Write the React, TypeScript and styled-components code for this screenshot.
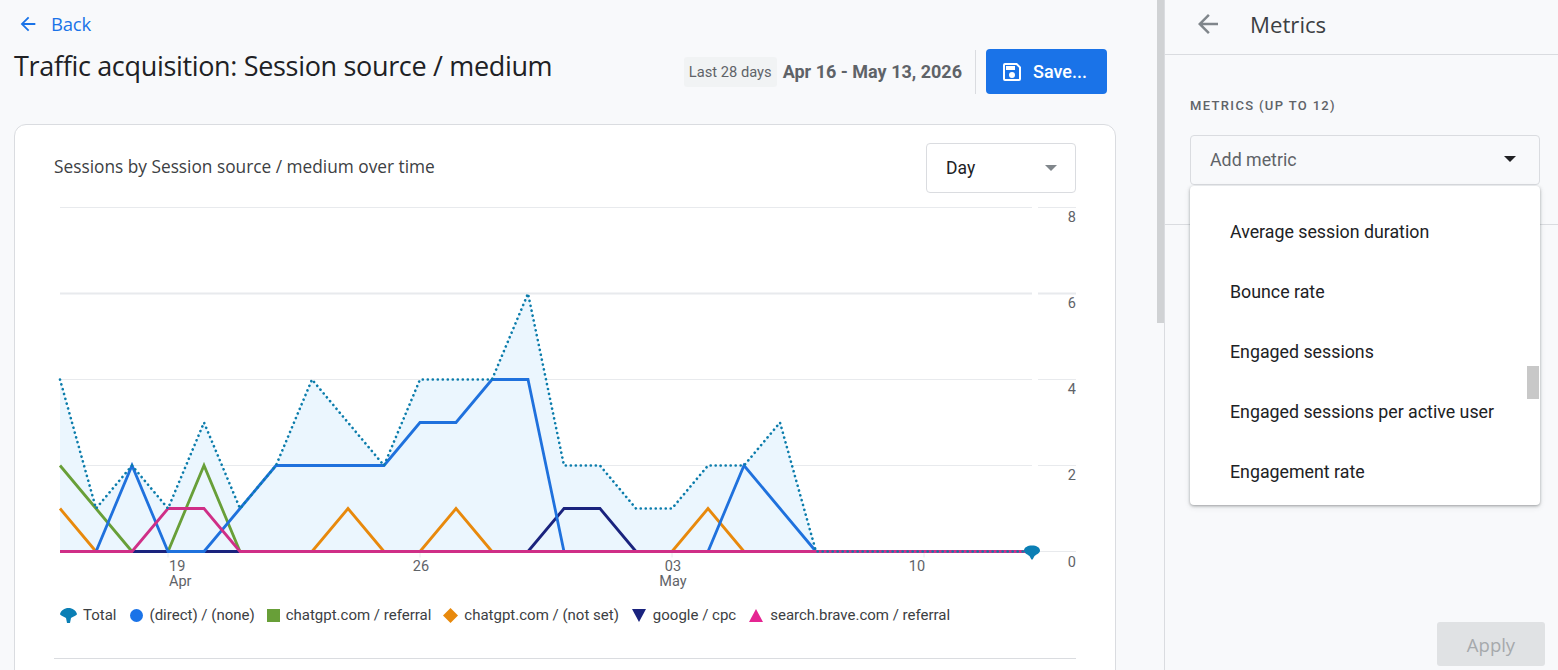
import styled, { createGlobalStyle } from "styled-components";

const GlobalStyle = createGlobalStyle`
  html, body { margin: 0; padding: 0; background: #f8f9fb; }
  body { font-family: Roboto, "Liberation Sans", sans-serif; color: #202124; }
`;

// chart scale: 36px per day, 43px per session, in page pixels minus the svg origin
const ORIGIN_X = 54;
const ORIGIN_Y = 200;
const px = (i: number) => 60 + i * 36 - ORIGIN_X;
const py = (v: number) => 551.5 - v * 43 - ORIGIN_Y;

const pad = (values: number[]) => [...values, ...Array(28 - values.length).fill(0)];

const TOTAL = pad([4, 1, 2, 1, 3, 1, 2, 4, 3, 2, 4, 4, 4, 6, 2, 2, 1, 1, 2, 2, 3]);
const DIRECT = pad([0, 0, 2, 0, 0, 1, 2, 2, 2, 2, 3, 3, 4, 4, 0, 0, 0, 0, 0, 2, 1]);
const GREEN = pad([2, 1, 0, 0, 2]);
const ORANGE = pad([1, 0, 0, 0, 0, 0, 0, 0, 1, 0, 0, 1, 0, 0, 0, 0, 0, 0, 1]);
const NAVY = pad([0, 0, 0, 0, 0, 0, 0, 0, 0, 0, 0, 0, 0, 0, 1, 1]);
const PINK = pad([0, 0, 0, 1, 1]);

const toPoints = (values: number[]) => values.map((v, i) => `${px(i)},${py(v)}`).join(" ");

const GRID = [
  { value: 8, label: "8", weight: 1 },
  { value: 6, label: "6", weight: 2 },
  { value: 4, label: "4", weight: 1 },
  { value: 2, label: "2", weight: 1 },
  { value: 0, label: "0", weight: 1 },
];

const METRICS = [
  "Average session duration",
  "Bounce rate",
  "Engaged sessions",
  "Engaged sessions per active user",
  "Engagement rate",
];

const ArrowBack = ({ size, color }: { size: number; color: string }) => (
  <svg width={size} height={size} viewBox="0 0 24 24" fill={color}>
    <path d="M20 11H7.83l5.59-5.59L12 4l-8 8 8 8 1.41-1.41L7.83 13H20v-2z" />
  </svg>
);

const SaveIcon = () => (
  <svg width="24" height="24" viewBox="0 0 24 24" fill="#fff">
    <path d="M17 3H5a2 2 0 0 0-2 2v14a2 2 0 0 0 2 2h14a2 2 0 0 0 2-2V7l-4-4zm2 16H5V5h11.17L19 7.83V19zm-7-7a3 3 0 1 0 0 6 3 3 0 0 0 0-6zM6 6h9v4H6z" />
  </svg>
);

const LegendMark = ({ kind }: { kind: string }) => {
  if (kind === "total") {
    return (
      <svg width="17" height="15" viewBox="0 0 17 15" fill="#0b7fb5">
        <path d="M0 6C1 2.5 4.5 0 8.5 0S16 2.5 17 6c0 1.5-4 2.5-6 4l-1 5H7L6 10C4 8.5 0 7.5 0 6z" />
      </svg>
    );
  }
  if (kind === "circle") {
    return (
      <svg width="15" height="13" viewBox="-1 0 15 13" fill="#1a73e8">
        <circle cx="6.5" cy="6.5" r="6.5" />
      </svg>
    );
  }
  if (kind === "square") {
    return (
      <svg width="13" height="13" viewBox="0 0 13 13" fill="#689f38">
        <rect width="13" height="13" />
      </svg>
    );
  }
  if (kind === "diamond") {
    return (
      <svg width="15" height="15" viewBox="0 0 16 16" fill="#e8890c">
        <path d="M8 0l8 8-8 8-8-8z" />
      </svg>
    );
  }
  if (kind === "down") {
    return (
      <svg width="16" height="13" viewBox="-1 0 16 13" fill="#1a237e">
        <path d="M0 0h14L7 13z" />
      </svg>
    );
  }
  return (
    <svg width="16" height="13" viewBox="-1 0 16 13" fill="#e52592">
      <path d="M7 0l7 13H0z" />
    </svg>
  );
};

const LEGEND = [
  { kind: "total", label: "Total" },
  { kind: "circle", label: "(direct) / (none)" },
  { kind: "square", label: "chatgpt.com / referral" },
  { kind: "diamond", label: "chatgpt.com / (not set)" },
  { kind: "down", label: "google / cpc" },
  { kind: "up", label: "search.brave.com / referral" },
];

const Chart = () => (
  <ChartSvg width="1022" height="396" viewBox="0 0 1022 396">
    {GRID.map((g) => (
      <g key={g.value}>
        <GridLine x1={px(0)} x2={978} y1={py(g.value)} y2={py(g.value)} strokeWidth={g.weight} />
        <GridLine x1={984} x2={1022} y1={py(g.value)} y2={py(g.value)} strokeWidth={g.weight} />
        <AxisText x={1022} y={py(g.value) + (g.value === 0 ? 15.5 : 14.5)} textAnchor="end">
          {g.label}
        </AxisText>
      </g>
    ))}

    <polygon points={`${px(0)},${py(0)} ${toPoints(TOTAL)} ${px(27)},${py(0)}`} fill="#ebf6fe" />

    {[3, 10, 17, 24].map((i) => (
      <GridLine key={i} x1={px(i)} x2={px(i)} y1={py(0)} y2={py(0) + 6} strokeWidth={1} />
    ))}

    <SeriesLine points={toPoints(ORANGE)} stroke="#e8890c" />
    <SeriesLine points={toPoints(GREEN)} stroke="#689f38" />
    <SeriesLine points={toPoints(NAVY)} stroke="#1a237e" />
    <SeriesLine points={toPoints(DIRECT)} stroke="#1f71dd" />
    <SeriesLine points={toPoints(PINK)} stroke="#cf2f87" />
    <DottedLine points={toPoints(TOTAL)} />

    <path
      transform={`translate(${px(27) - 8} ${py(0) - 6})`}
      fill="#0b7fb5"
      d="M0 5C0 2 3.5 0 8 0s8 2 8 5c0 2.5-3.5 4-5.5 5.5L8.6 14H7.4L5.5 10.5C3.5 9 0 7.5 0 5z"
    />

    <AxisText x={px(3) + 1} y={371}>19</AxisText>
    <AxisText x={px(3) + 1} y={386}>Apr</AxisText>
    <AxisText x={px(10) + 1} y={371} textAnchor="middle">26</AxisText>
    <AxisText x={px(17) + 1} y={371} textAnchor="middle">03</AxisText>
    <AxisText x={px(17) + 1} y={386} textAnchor="middle">May</AxisText>
    <AxisText x={px(24) - 7} y={371} textAnchor="middle">10</AxisText>
  </ChartSvg>
);

const App = () => (
  <Page>
    <GlobalStyle />
    <Main>
      <BackRow>
        <ArrowBack size={22} color="#1a73e8" />
        <BackLabel>Back</BackLabel>
      </BackRow>

      <HeadRow>
        <Title>Traffic acquisition: Session source / medium</Title>
        <Toolbar>
          <RangeChip>Last 28 days</RangeChip>
          <DateRange>Apr 16 - May 13, 2026</DateRange>
          <Divider />
          <SaveButton>
            <SaveIcon />
            Save...
          </SaveButton>
        </Toolbar>
      </HeadRow>

      <Card>
        <CardHead>
          <CardTitle>Sessions by Session source / medium over time</CardTitle>
          <GrainSelect>
            Day
            <Caret $color="#80868b" />
          </GrainSelect>
        </CardHead>
        <Chart />
        <Legend>
          {LEGEND.map((item) => (
            <LegendItem key={item.label}>
              <LegendMark kind={item.kind} />
              {item.label}
            </LegendItem>
          ))}
        </Legend>
        <CardRule />
      </Card>
    </Main>

    <ScrollTrack>
      <ScrollThumb />
    </ScrollTrack>

    <Panel>
      <PanelHead>
        <ArrowBack size={30} color="#80868b" />
        <PanelTitle>Metrics</PanelTitle>
      </PanelHead>
      <PanelSection>
        <FieldLabel>METRICS (UP TO 12)</FieldLabel>
        <MetricField>
          Add metric
          <Caret $color="#202124" />
        </MetricField>
        <Menu>
          {METRICS.map((m) => (
            <MenuItem key={m}>{m}</MenuItem>
          ))}
          <MenuThumb />
        </Menu>
      </PanelSection>
      <PanelFoot>
        <ApplyButton>Apply</ApplyButton>
      </PanelFoot>
    </Panel>
  </Page>
);

const Page = styled.div`
  display: flex;
  width: 1558px;
  height: 670px;
  overflow: hidden;
  background: #f8f9fb;
`;
const Main = styled.main`
  width: 1157px;
  flex: none;
  padding: 0 41px 0 14px;
  box-sizing: border-box;
`;
const BackRow = styled.div`
  display: flex;
  align-items: center;
  gap: 12px;
  height: 47px;
  margin-bottom: 2px;
  padding-left: 3px;
`;
const BackLabel = styled.span`
  font-family: "Open Sans", sans-serif;
  font-size: 18.5px;
  font-weight: 500;
  letter-spacing: -0.2px;
  color: #1a73e8;
`;
const HeadRow = styled.div`
  display: flex;
  justify-content: space-between;
  height: 45px;
  padding-right: 9px;
`;
const Title = styled.h1`
  margin: 0;
  font-family: "Open Sans", sans-serif;
  font-size: 27px;
  line-height: 34px;
  font-weight: 400;
  letter-spacing: -0.33px;
  color: #202124;
`;
const Toolbar = styled.div`
  display: flex;
  align-items: center;
`;
const RangeChip = styled.span`
  display: flex;
  align-items: center;
  height: 30px;
  padding: 0 5px;
  margin-top: 1px;
  border-radius: 3px;
  background: #f1f3f4;
  font-size: 14.7px;
  color: #5f6368;
`;
const DateRange = styled.span`
  margin-left: 6px;
  font-size: 18px;
  font-weight: 700;
  color: #5f6368;
`;
const Divider = styled.span`
  width: 1px;
  height: 44px;
  margin: 0 10px 0 13px;
  background: #dadce0;
`;
const SaveButton = styled.button`
  display: flex;
  align-items: center;
  gap: 9px;
  width: 121px;
  height: 45px;
  padding: 0 0 0 14px;
  border: 0;
  border-radius: 4px;
  background: #1a73e8;
  font-family: Roboto, sans-serif;
  font-size: 18px;
  font-weight: 500;
  color: #fff;
`;
const Card = styled.section`
  margin-top: 30px;
  height: 600px;
  padding: 18px 39px 0;
  box-sizing: border-box;
  background: #fff;
  border: 1px solid #dadce0;
  border-radius: 12px;
`;
const CardHead = styled.div`
  display: flex;
  justify-content: space-between;
  align-items: flex-start;
  height: 50px;
`;
const CardTitle = styled.h2`
  margin: 0;
  font-family: "Open Sans", sans-serif;
  font-size: 17.3px;
  line-height: 48px;
  font-weight: 500;
  color: #3c4043;
`;
const GrainSelect = styled.div`
  display: flex;
  justify-content: space-between;
  align-items: center;
  width: 150px;
  height: 50px;
  padding: 0 18px 1px 19px;
  box-sizing: border-box;
  border: 1px solid #dadce0;
  border-radius: 4px;
  font-size: 17.5px;
  color: #202124;
`;
const Caret = styled.span<{ $color: string }>`
  width: 0;
  height: 0;
  border-left: 6.5px solid transparent;
  border-right: 6.5px solid transparent;
  border-top: 6px solid ${({ $color }) => $color};
`;
const ChartSvg = styled.svg`
  display: block;
  margin-top: 7px;
`;
const GridLine = styled.line`
  stroke: #e8eaed;
`;
const AxisText = styled.text`
  font-family: Roboto, sans-serif;
  font-size: 14.5px;
  fill: #5f6368;
`;
const SeriesLine = styled.polyline`
  fill: none;
  stroke-width: 2.8;
  stroke-linejoin: miter;
`;
const DottedLine = styled.polyline`
  fill: none;
  stroke: #0b7cab;
  stroke-width: 2.6;
  stroke-linecap: round;
  stroke-dasharray: 0.1 4.9;
`;
const Legend = styled.div`
  display: flex;
  align-items: center;
  margin-left: 6px;
  margin-top: 8px;
  height: 22px;
  gap: 12px;
`;
const LegendItem = styled.span`
  display: flex;
  align-items: center;
  gap: 6px;
  font-size: 15px;
  color: #3c4043;
  white-space: nowrap;
`;
const CardRule = styled.hr`
  margin: 32px 0 0;
  border: 0;
  border-top: 1px solid #dadce0;
`;
const ScrollTrack = styled.div`
  width: 8px;
  flex: none;
  box-sizing: border-box;
  border-right: 1px solid #dadce0;
`;
const ScrollThumb = styled.div`
  height: 323px;
  background: #d0d2d4;
`;
const Panel = styled.aside`
  flex: 1;
  display: flex;
  flex-direction: column;
`;
const PanelHead = styled.header`
  display: flex;
  align-items: center;
  gap: 27px;
  height: 55px;
  padding: 0 0 6px 28px;
  box-sizing: border-box;
  border-bottom: 1px solid #dadce0;
`;
const PanelTitle = styled.h2`
  margin: 0;
  font-family: "Open Sans", sans-serif;
  font-size: 22.2px;
  font-weight: 400;
  color: #3c4043;
`;
const PanelSection = styled.div`
  position: relative;
  height: 170px;
  padding: 42px 18px 0 25px;
  box-sizing: border-box;
  border-bottom: 1px solid #dadce0;
`;
const FieldLabel = styled.div`
  font-size: 13px;
  line-height: 18px;
  font-weight: 500;
  letter-spacing: 1.35px;
  color: #5f6368;
`;
const MetricField = styled.div`
  display: flex;
  justify-content: space-between;
  align-items: center;
  height: 50px;
  margin-top: 20px;
  padding: 0 23px 2px 19px;
  box-sizing: border-box;
  border: 1px solid #dadce0;
  border-radius: 4px;
  font-size: 17.8px;
  color: #5f6368;
`;
const Menu = styled.div`
  position: absolute;
  left: 25px;
  top: 131px;
  width: 350px;
  height: 319px;
  padding: 16px 0 0 40px;
  box-sizing: border-box;
  background: #fff;
  border-radius: 4px;
  box-shadow: 0 1px 3px rgba(60, 64, 67, 0.45), 0 2px 6px rgba(60, 64, 67, 0.1);
`;
const MenuItem = styled.div`
  height: 60px;
  line-height: 60px;
  font-size: 17.8px;
  color: #202124;
`;
const MenuThumb = styled.div`
  position: absolute;
  right: 1px;
  top: 180px;
  width: 12px;
  height: 33px;
  background: #c8c8c8;
`;
const PanelFoot = styled.footer`
  flex: 1;
  display: flex;
  justify-content: flex-end;
  align-items: flex-end;
  padding: 0 13px 4px 0;
`;
const ApplyButton = styled.button`
  width: 108px;
  height: 44px;
  border: 0;
  border-radius: 3px;
  background: #e0e2e4;
  font-family: "Open Sans", sans-serif;
  font-size: 18.5px;
  font-weight: 500;
  color: #a6a9ac;
`;

export default App;
